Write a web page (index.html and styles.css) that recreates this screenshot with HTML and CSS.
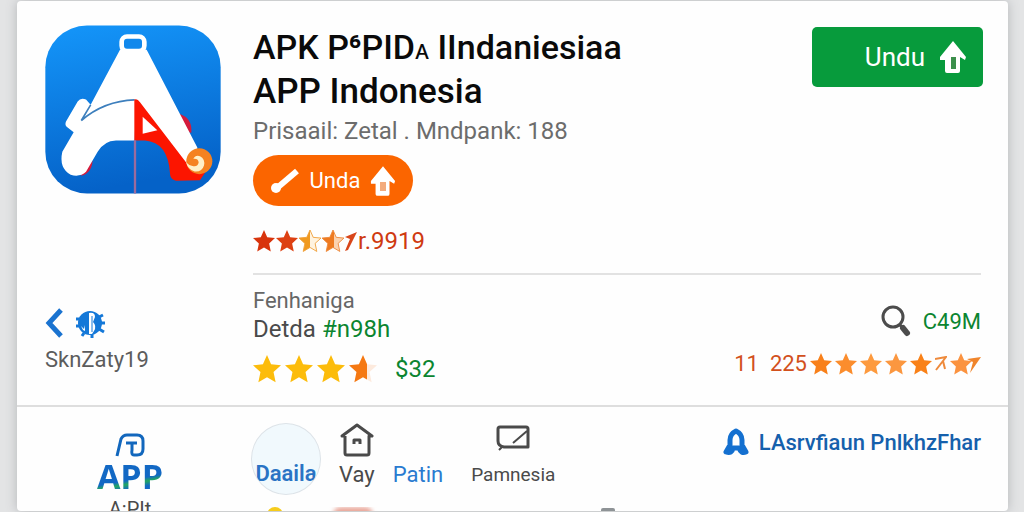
FILE: index.html
```html
<!DOCTYPE html>
<html lang="id">
<head>
  <meta charset="UTF-8">
  <meta name="viewport" content="width=device-width, initial-scale=1.0">
  <title>APP Indonesia</title>
  <link rel="stylesheet" href="styles.css">
</head>
<body>

<!-- Shared shapes -->
<svg class="defs" width="0" height="0" aria-hidden="true">
  <defs>
    <symbol id="star" viewBox="0 0 24 24">
      <path d="M12 0 L15.5 8 L24 8.8 L17.6 14.6 L19.4 23.4 L12 19 L4.6 23.4 L6.4 14.6 L0 8.8 L8.5 8 Z"/>
    </symbol>
    <symbol id="arrowHouse" viewBox="0 0 28 34">
      <path fill="#fff" d="M14 1 L27 17 L26 20 L21 17 V31 Q21 33 19 33 H8 Q6 33 6 31 V20 H1 V17 Z"/>
    </symbol>
    <linearGradient id="halfGold">
      <stop offset="0.5" stop-color="#f0991f"/>
      <stop offset="0.5" stop-color="#fff3df"/>
    </linearGradient>
    <linearGradient id="halfOrange">
      <stop offset="0.55" stop-color="#ee7a20"/>
      <stop offset="0.55" stop-color="#fbd3b0"/>
    </linearGradient>
    <linearGradient id="halfDeep">
      <stop offset="0.64" stop-color="#f57812"/>
      <stop offset="0.64" stop-color="#fdeadd"/>
    </linearGradient>
    <linearGradient id="iconBlue" x1="0" y1="0" x2="0.2" y2="1">
      <stop offset="0" stop-color="#1496fa"/>
      <stop offset="1" stop-color="#0562c8"/>
    </linearGradient>
  </defs>
</svg>

<main class="card">

  <!-- App header -->
  <section class="row header">
    <svg class="app-icon" viewBox="45 45 528 506" role="img" aria-label="APP Indonesia">
      <rect x="46" y="46" width="526" height="504" rx="125" fill="url(#iconBlue)"/>
      <path fill="#d41b3c" d="M445 310 Q488 322 484 368 L465 365 Z M188 452 Q184 492 152 497 Z"/>
      <rect x="275" y="79" width="68" height="44" rx="16" fill="#1188ec" stroke="#fff" stroke-width="14"/>
      <path fill="#fff" d="M270 119 H350 L502 412 L500 480 H470 L318 268 L314 391 H258 Q222 392 203 425 L168 485 Q150 502 122 494 Q86 474 97 425 L131 366 L110 350 Q104 344 108 334 L143 274 Q152 261 168 268 L182 284 Z"/>
      <path fill="none" stroke="#3d7fbd" stroke-width="5" d="M182 284 L154 331 Q222 272 314 269"/>
      <path fill="#fc1500" d="M313 268 Q322 264 330 276 L480 472 L526 486 L510 510 L438 512 Q420 508 420 490 Q414 396 345 391 H313 Z"/>
      <path fill="#fff" d="M338 320 L382 360 L338 371 Z"/>
      <path stroke="#9b6b9d" stroke-width="7" d="M315 390 V550"/>
      <circle cx="508" cy="453" r="39" fill="#f58220"/>
      <path fill="#fff0c8" d="M468 456 Q474 478 494 484 Q516 486 522 466 Q526 446 510 438 Q496 434 490 446 Q504 444 506 456 Q504 470 490 468 Q476 466 468 456 Z"/>
    </svg>

    <div class="summary">
      <div class="title-row">
        <div>
          <h1><b>APK P⁶PID<small>ᴀ</small> IIndaniesiaa</b><br>APP Indonesia</h1>
          <p class="subtitle">Prisaail: Zetal . Mndpank: 188</p>
        </div>
        <button class="btn btn-green">Undu
          <svg width="28" height="34" aria-hidden="true"><use href="#arrowHouse"/><path fill="#3c8f4c" d="M12 17 h5 v12 h-5 z"/></svg>
        </button>
      </div>

      <button class="btn btn-orange">
        <svg width="30" height="28" viewBox="0 0 30 28" aria-hidden="true"><circle cx="6" cy="21" r="5" fill="#fff"/><path stroke="#fff" stroke-width="6" d="M7 21 L27 4"/></svg>
        Unda
        <svg width="26" height="32" aria-hidden="true"><use href="#arrowHouse"/><path fill="#f3ab7d" d="M10 17 h6 v9 h-6 z"/></svg>
      </button>

      <div class="rating">
        <svg class="star" fill="#d8340c"><use href="#star"/></svg>
        <svg class="star" fill="#dd4012"><use href="#star"/></svg>
        <svg class="star" fill="url(#halfGold)" stroke="#f0a13c"><use href="#star"/></svg>
        <svg class="star" fill="url(#halfOrange)" stroke="#ee8a3c"><use href="#star"/></svg>
        <svg width="12" height="20" viewBox="0 0 12 20" aria-hidden="true"><path fill="#d8461a" d="M0 6 L12 1 L3 19 L0 20 L5 8 Z"/></svg>
        <span>r.9919</span>
      </div>
    </div>
  </section>

  <!-- Details -->
  <section class="row details">
    <div class="source">
      <a href="#" class="source-icons" aria-label="Kembali">
        <svg width="18" height="30" viewBox="0 0 18 30"><path fill="none" stroke="#1a73d0" stroke-width="5" d="M16 2 L4 15 L16 28"/></svg>
        <svg width="30" height="30" viewBox="0 0 30 30">
          <circle cx="15" cy="15" r="12" fill="#1478d8"/>
          <path stroke="#1478d8" stroke-width="3" d="M1 11 H6 M1 18 H6 M24 9 L28 7 M25 15 H30 M24 21 L29 24 M9 25 L7 28 M17 26 V30"/>
          <path fill="#fff" d="M14 5 Q20 4 20 9 L18 14 Q22 18 19 23 L17 26 L14 26 Z M6 18 L9 21 L10 17 V23 L8 22 Z"/>
          <path stroke="#1478d8" stroke-width="1" d="M17 8 V24"/>
        </svg>
      </a>
      <span>SknZaty19</span>
    </div>

    <div class="facts">
      <div>
        <p class="fact-small">Fenhaniga</p>
        <p class="fact">Detda <span class="green">#n98h</span></p>
        <div class="big-rating">
          <svg class="star-big" fill="#fcbc0b"><use href="#star"/></svg>
          <svg class="star-big" fill="#fcbc0b"><use href="#star"/></svg>
          <svg class="star-big" fill="#fcbc0b"><use href="#star"/></svg>
          <svg class="star-big" fill="url(#halfDeep)"><use href="#star"/></svg>
          <span class="green">$32</span>
        </div>
      </div>
      <div class="facts-right">
        <div class="search">
          <svg width="30" height="32" viewBox="0 0 30 32" aria-hidden="true"><circle cx="12" cy="12" r="10" fill="none" stroke="#4c4c4c" stroke-width="3"/><path stroke="#4c4c4c" stroke-width="3" d="M18 19 L22 23"/><path stroke="#4c4c4c" stroke-width="6" stroke-linecap="round" d="M22 23 L26 28"/></svg>
          <span class="green">C49M</span>
        </div>
        <div class="count">
          <span>11&nbsp; 225</span>
          <svg class="star" fill="#f8801a"><use href="#star"/></svg>
          <svg class="star" fill="#fb8d2d"><use href="#star"/></svg>
          <svg class="star" fill="#fd9a3e"><use href="#star"/></svg>
          <svg class="star" fill="#fb9740"><use href="#star"/></svg>
          <svg class="star" fill="#f98118"><use href="#star"/></svg>
          <svg width="12" height="16" viewBox="0 0 12 16" aria-hidden="true"><path fill="none" stroke="#ee8a3c" stroke-width="2" d="M0 3 L11 1 L1 14 M8 5 L10 13"/></svg>
          <svg class="star" fill="#fb9340"><use href="#star"/></svg>
          <svg class="tail" width="14" height="18" viewBox="0 0 14 18" aria-hidden="true"><path fill="#f0852c" d="M0 4 L14 2 L3 18 L6 7 Z"/></svg>
        </div>
      </div>
    </div>
  </section>

  <!-- Bottom navigation -->
  <section class="row bottom">
    <div class="brand">
      <svg width="30" height="24" viewBox="0 0 30 24" aria-hidden="true"><path fill="none" stroke="#1267bd" stroke-width="3" d="M2 23 L6 6 Q8 2 12 2 H22 Q28 2 28 8 V16 Q28 22 22 22 H19 Q16 22 17 17 V10 M11 10 H22"/></svg>
      <strong>APP</strong>
      <span>A:PIt</span>
    </div>

    <nav>
      <a href="#" class="tab active"><span>Daaila</span></a>
      <a href="#" class="tab">
        <svg width="34" height="34" viewBox="0 0 34 34" aria-hidden="true"><path fill="none" stroke="#4a4a4a" stroke-width="3" stroke-linejoin="round" d="M5 13 H2 L17 2 L32 13 H29 V30 Q29 32 27 32 H7 Q5 32 5 30 V13 M14 21 V17 H20 V21"/></svg>
        <span>Vay</span>
      </a>
      <a href="#" class="tab blue"><span>Patin</span></a>
      <a href="#" class="tab last">
        <svg width="34" height="34" viewBox="0 0 34 34" aria-hidden="true"><path fill="none" stroke="#4a4a4a" stroke-width="3" stroke-linejoin="round" d="M4 4 H30 Q32 4 32 6 V24 H8 Q2 23 2 18 V6 Q2 4 4 4 Z"/><path stroke="#4a4a4a" stroke-width="2" d="M17 20 L31 8 M6 24 L3 27"/></svg>
        <span>Pamnesia</span>
      </a>
    </nav>

    <a href="#" class="notify">
      <svg width="26" height="28" viewBox="0 0 26 28" aria-hidden="true"><path fill="none" stroke="#1470d0" stroke-width="5" stroke-linejoin="round" d="M13 3 Q7 6 7 12 V17 L3 24 Q9 26 10 20 H16 Q18 26 23 24 L19 17 V12 Q19 6 13 3 Z"/></svg>
      LAsrvfiaun PnlkhzFhar
    </a>
  </section>

  <div class="peek">
    <i class="dot yellow"></i>
    <i class="dot red"></i>
    <i class="dot gray"></i>
  </div>
</main>

</body>
</html>
```
FILE: styles.css
```css
* {
  box-sizing: border-box;
}
body {
  margin: 0;
  padding: 1px 16px 1px 17px;
  font-family: Roboto, Arial, sans-serif;
  background: #e3e4e5;
  color: #4a4a4a;
}
h1, p {
  margin: 0;
}
a {
  color: inherit;
  text-decoration: none;
}
svg {
  display: block;
  flex: none;
}
.defs {
  position: absolute;
}
.card {
  position: relative;
  height: calc(100vh - 2px);
  overflow: hidden;
  background: #fefefe;
  border-radius: 4px;
  box-shadow: 0 0 12px #b4b6b8;
}
.row {
  display: grid;
  grid-template-columns: 176px 1fr;
  column-gap: 32px;
  padding: 0 27px 0 28px;
}

/* header */
.header {
  padding-top: 24px;
}
.app-icon {
  width: 176px;
  height: 169px;
}
.title-row {
  display: flex;
  justify-content: space-between;
  align-items: flex-start;
}
h1 {
  padding-top: 1px;
  font-size: 35px;
  line-height: 42px;
  font-weight: 500;
  color: #0a0a0a;
  white-space: nowrap;
}
h1 b {
  font-size: 34px;
  font-weight: 500;
}
.subtitle {
  font-size: 24px;
  line-height: 36px;
  color: #6c6c6c;
}
.btn {
  display: flex;
  align-items: center;
  justify-content: center;
  border: none;
  color: white;
  font-family: inherit;
  cursor: pointer;
}
.btn-green {
  width: 171px;
  height: 60px;
  padding: 0 16px;
  justify-content: flex-end;
  gap: 14px;
  margin-top: 2px;
  margin-right: -2px;
  font-size: 26px;
  background: #079b3c;
  border-radius: 5px;
}
.btn-orange {
  width: 160px;
  height: 51px;
  gap: 10px;
  margin-top: 6px;
  font-size: 22px;
  background: #fb6500;
  border-radius: 26px;
}
.rating, .big-rating, .count, .search {
  display: flex;
  align-items: center;
}
.star {
  width: 22px;
  height: 22px;
  overflow: visible;
}
.rating {
  gap: 1px;
  height: 24px;
  margin: 23px 0 20px;
  font-size: 24px;
  color: #cf3a10;
}

/* details */
.details {
  border-bottom: 2px solid #dedede;
}
.source {
  padding-top: 35px;
  font-size: 22px;
}
.source span {
  display: block;
  margin-top: 9px;
  line-height: 26px;
  color: #5c5c5c;
}
.source-icons {
  display: flex;
  gap: 12px;
}
.facts {
  display: flex;
  justify-content: space-between;
  height: 132px;
  padding-top: 12px;
  border-top: 2px solid #e2e2e2;
}
.fact-small {
  font-size: 22px;
  line-height: 28px;
  color: #666;
}
.fact {
  font-size: 24px;
  line-height: 28px;
}
.green {
  color: #0b8530;
}
.big-rating {
  gap: 4px;
  margin-top: 12px;
  font-size: 24px;
}
.star-big {
  width: 28px;
  height: 28px;
}
.big-rating span {
  margin-left: 14px;
}
.facts-right {
  padding-top: 18px;
}
.search {
  justify-content: flex-end;
  gap: 12px;
  font-size: 22px;
}
.count {
  gap: 3px;
  margin-top: 14px;
  font-size: 22px;
  color: #d2501c;
}
.tail {
  margin-left: -8px;
}

/* bottom */
.bottom {
  grid-template-columns: 176px 1fr auto;
}
.brand {
  display: flex;
  flex-direction: column;
  align-items: center;
  padding: 26px 6px 0 0;
}
.brand strong {
  font-family: "Open Sans", Arial, sans-serif;
  font-size: 34px;
  line-height: 38px;
  background: linear-gradient(170deg, #1268c4 58%, #22a860 66%, #1268c4 76%);
  background-clip: text;
  -webkit-background-clip: text;
  color: transparent;
}
.brand span {
  font-size: 20px;
  line-height: 28px;
}
nav {
  display: flex;
  align-items: flex-start;
  padding-top: 16px;
}
.tab {
  display: flex;
  flex-direction: column;
  justify-content: space-between;
  align-items: center;
  height: 65px;
  margin-right: 18px;
  font-size: 22px;
  line-height: 26px;
}
.tab span {
  margin-top: auto;
}
.tab.blue {
  color: #2a7bd0;
}
.tab.last {
  margin-left: 10px;
  font-size: 19px;
}
.tab.active {
  width: 70px;
  height: 72px;
  margin: 0 18px 0 -2px;
  padding-bottom: 7px;
  overflow: hidden;
  border: 1px solid #dde3e8;
  border-radius: 50%;
  background: #f1f9fd;
  color: #2a73c4;
  font-weight: 600;
}
.notify {
  display: flex;
  align-items: center;
  gap: 10px;
  height: 70px;
  font-size: 22px;
  font-weight: 500;
  color: #1560ac;
}

/* next row, just coming into view */
.peek {
  position: absolute;
  left: 0;
  right: 0;
  bottom: 0;
  height: 4px;
  overflow: hidden;
}
.dot {
  position: absolute;
  top: 0;
  height: 16px;
  border-radius: 8px;
}
.yellow {
  left: 250px;
  width: 16px;
  background: #f6cc1c;
}
.red {
  left: 316px;
  width: 40px;
  background: #eaa99c;
  filter: blur(2px);
}
.gray {
  left: 584px;
  top: 1px;
  width: 14px;
  border-radius: 2px;
  background: #8e9396;
}
```
